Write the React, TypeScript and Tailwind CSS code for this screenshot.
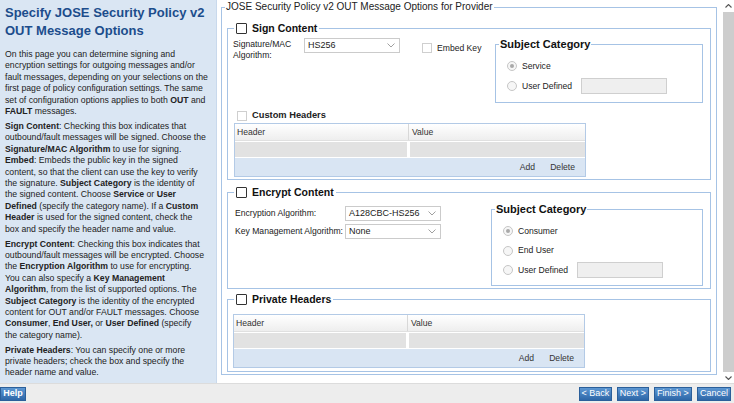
import React from "react";

const Check = ({ dark }: { dark?: boolean }) =>
  dark ? (
    <span className="inline-block h-[11px] w-[11px] shrink-0 rounded-[1px] border border-[#333] bg-white" />
  ) : (
    <span className="inline-block h-[10px] w-[10px] shrink-0 border border-[#cfcfcf] bg-white" />
  );

const Radio = ({ on }: { on?: boolean }) => (
  <span className="flex h-[10px] w-[10px] shrink-0 items-center justify-center rounded-full border border-[#c6c6c6] bg-[#f6f6f6]">
    {on && <span className="h-[4px] w-[4px] rounded-full bg-[#a9a9a9]" />}
  </span>
);

const Chevron = () => (
  <svg width="8" height="5" viewBox="0 0 8 5" className="shrink-0">
    <path d="M0.5 0.5 L4 4 L7.5 0.5" fill="none" stroke="#a0a0a0" strokeWidth="1" />
  </svg>
);

const Select = ({ value }: { value: string }) => (
  <div className="flex h-[15px] w-[96px] shrink-0 items-center justify-between border border-[#cbcbcb] bg-white pl-[3px] pr-[4px] text-[9px] leading-[13px] text-[#222]">
    <span>{value}</span>
    <Chevron />
  </div>
);

const Table = () => (
  <div className="w-[352px] border border-[#b3cae6] text-[8.6px] text-[#333]">
    <div className="flex h-[17px] border-b border-[#e0e0e0] bg-linear-to-b from-white to-[#eeeeee] leading-[16px]">
      <div className="w-[174px] border-r border-[#d8d8d8] pl-[2px]">Header</div>
      <div className="flex-1 pl-[3px]">Value</div>
    </div>
    <div className="flex h-[17px] gap-[3px] bg-white py-[1px]">
      <div className="w-[172px] bg-[#e2e2e2]" />
      <div className="flex-1 bg-[#e2e2e2]" />
    </div>
    <div className="flex h-[18px] items-center justify-end bg-[#d9e5f3] pr-[10px]">
      <span>Add</span>
      <span className="ml-[15px]">Delete</span>
    </div>
  </div>
);

const L = ({ children }: { children: React.ReactNode }) => (
  <div className="whitespace-nowrap leading-[11.4px]">{children}</div>
);

const Btn = ({ children, w, bold }: { children: React.ReactNode; w: string; bold?: boolean }) => (
  <div
    className={`flex h-[14px] items-center justify-center border border-[#2b5f9a] bg-linear-to-b from-[#5d97d2] to-[#2d67a8] text-[9px] text-white ${w} ${bold ? "font-bold" : ""}`}
  >
    {children}
  </div>
);

export default function App() {
  return (
    <div className="flex h-[403px] w-[734px] flex-col overflow-hidden bg-white font-['Liberation_Sans',Arial,sans-serif] text-[#222]">
      <div className="flex h-[383px]">
        {/* left help panel */}
        <div className="w-[217px] shrink-0 border-r border-[#c9d9ec] bg-[#dae6f3] pl-[5px] pt-[4px] text-[8.7px] text-[#222]">
          <div className="text-[13px] font-bold leading-[18px] text-[#1c4d8c]">
            Specify JOSE Security Policy v2
            <br />
            OUT Message Options
          </div>
          <div className="mt-[9px]">
            <L>On this page you can determine signing and</L>
            <L>encryption settings for outgoing messages and/or</L>
            <L>fault messages, depending on your selections on the</L>
            <L>first page of policy configuration settings. The same</L>
            <L>
              set of configuration options applies to both <b>OUT</b> and
            </L>
            <L>
              <b>FAULT</b> messages.
            </L>
          </div>
          <div className="mt-[3.5px]">
            <L>
              <b>Sign Content</b>: Checking this box indicates that
            </L>
            <L>outbound/fault messages will be signed. Choose the</L>
            <L>
              <b>Signature/MAC Algorithm</b> to use for signing.
            </L>
            <L>
              <b>Embed</b>: Embeds the public key in the signed
            </L>
            <L>content, so that the client can use the key to verify</L>
            <L>
              the signature. <b>Subject Category</b> is the identity of
            </L>
            <L>
              the signed content. Choose <b>Service</b> or <b>User</b>
            </L>
            <L>
              <b>Defined</b> (specify the category name). If a <b>Custom</b>
            </L>
            <L>
              <b>Header</b> is used for the signed content, check the
            </L>
            <L>box and specify the header name and value.</L>
          </div>
          <div className="mt-[3.5px]">
            <L>
              <b>Encrypt Content</b>: Checking this box indicates that
            </L>
            <L>outbound/fault messages will be encrypted. Choose</L>
            <L>
              the <b>Encryption Algorithm</b> to use for encrypting.
            </L>
            <L>
              You can also specify a <b>Key Management</b>
            </L>
            <L>
              <b>Algorithm</b>, from the list of supported options. The
            </L>
            <L>
              <b>Subject Category</b> is the identity of the encrypted
            </L>
            <L>content for OUT and/or FAULT messages. Choose</L>
            <L>
              <b>Consumer</b>, <b>End User,</b> or <b>User Defined</b> (specify
            </L>
            <L>the category name).</L>
          </div>
          <div className="mt-[3.5px]">
            <L>
              <b>Private Headers</b>: You can specify one or more
            </L>
            <L>private headers; check the box and specify the</L>
            <L>header name and value.</L>
          </div>
        </div>

        {/* main area */}
        <div className="flex flex-1">
          <div className="w-[506px] pl-[4px] pt-[1px]">
            <fieldset className="w-[496px] border border-[#a6c3e5] pb-[2px]">
              <legend className="ml-[3px] px-[1px] text-[10px] leading-[12px] text-[#222]">
                JOSE Security Policy v2 OUT Message Options for Provider
              </legend>
              <div className="px-[5px]">
                {/* Sign Content */}
                <fieldset className="mt-[9px] w-[484px] border border-[#a6c3e5] pb-[2px]">
                  <legend className="ml-[6px] px-[2px]">
                    <span className="flex h-[13px] items-center gap-[5px]">
                      <Check dark />
                      <span className="text-[10.5px] font-bold leading-[13px] text-[#111]">Sign Content</span>
                    </span>
                  </legend>
                  <div className="pl-[5px] pr-[7px]">
                    <div className="mt-[3px] flex items-start">
                      <div className="w-[71px] pt-[0.5px] text-[8.6px] leading-[11px]">
                        Signature/MAC
                        <br />
                        Algorithm:
                      </div>
                      <Select value="HS256" />
                      <div className="ml-[22px] mt-[5px] flex items-center">
                        <Check />
                        <span className="ml-[5px] text-[8.6px] leading-[10px]">Embed Key</span>
                      </div>
                      <fieldset className="ml-auto w-[208px] border border-[#a6c3e5] pb-[8px]">
                        <legend className="ml-[3px] px-[1px] text-[11px] font-bold leading-[12px] text-[#111]">
                          Subject Category
                        </legend>
                        <div className="flex flex-col gap-[4px] pl-[11px] pt-[8px] text-[8.6px]">
                          <div className="flex h-[16px] items-center">
                            <Radio on />
                            <span className="ml-[5px]">Service</span>
                          </div>
                          <div className="flex h-[16px] items-center">
                            <Radio />
                            <span className="ml-[5px]">User Defined</span>
                            <span className="ml-[9px] h-[16px] w-[86px] border border-[#cfcfcf] bg-[#efefef]" />
                          </div>
                        </div>
                      </fieldset>
                    </div>
                    <div className="mt-[6px] flex h-[13px] items-center pl-[4px]">
                      <Check />
                      <span className="ml-[5px] text-[9.3px] font-bold text-[#222]">Custom Headers</span>
                    </div>
                    <div className="ml-[1px] mt-[1px]">
                      <Table />
                    </div>
                  </div>
                </fieldset>

                {/* Encrypt Content */}
                <fieldset className="mt-[6px] w-[484px] border border-[#a6c3e5] pb-[2px]">
                  <legend className="ml-[6px] px-[2px]">
                    <span className="flex h-[13px] items-center gap-[5px]">
                      <Check dark />
                      <span className="text-[10.5px] font-bold leading-[13px] text-[#111]">Encrypt Content</span>
                    </span>
                  </legend>
                  <div className="pl-[7px] pr-[7px]">
                    <div className="mt-[4px] flex items-start">
                      <div className="mt-[3px] flex flex-col gap-[3px] text-[8.6px]">
                        <div className="flex items-center">
                          <span className="w-[110px]">Encryption Algorithm:</span>
                          <Select value="A128CBC-HS256" />
                        </div>
                        <div className="flex items-center">
                          <span className="w-[110px]">Key Management Algorithm:</span>
                          <Select value="None" />
                        </div>
                      </div>
                      <fieldset className="ml-auto w-[212px] border border-[#a6c3e5] pb-[7px]">
                        <legend className="ml-[3px] px-[1px] text-[11px] font-bold leading-[12px] text-[#111]">
                          Subject Category
                        </legend>
                        <div className="flex flex-col gap-[3.5px] pl-[11px] pt-[8px] text-[8.6px]">
                          <div className="flex h-[16px] items-center">
                            <Radio on />
                            <span className="ml-[5px]">Consumer</span>
                          </div>
                          <div className="flex h-[16px] items-center">
                            <Radio />
                            <span className="ml-[5px]">End User</span>
                          </div>
                          <div className="flex h-[16px] items-center">
                            <Radio />
                            <span className="ml-[5px]">User Defined</span>
                            <span className="ml-[9px] h-[16px] w-[86px] border border-[#cfcfcf] bg-[#efefef]" />
                          </div>
                        </div>
                      </fieldset>
                    </div>
                  </div>
                </fieldset>

                {/* Private Headers */}
                <fieldset className="mt-[4px] w-[484px] border border-[#a6c3e5] pb-[3px]">
                  <legend className="ml-[6px] px-[2px]">
                    <span className="flex h-[13px] items-center gap-[5px]">
                      <Check dark />
                      <span className="text-[10.5px] font-bold leading-[13px] text-[#111]">Private Headers</span>
                    </span>
                  </legend>
                  <div className="mt-[8px] pl-[5px]">
                    <Table />
                  </div>
                </fieldset>
              </div>
            </fieldset>
          </div>

          {/* scrollbar */}
          <div className="flex w-[11px] flex-col bg-white">
            <div className="flex h-[12px] items-center justify-center">
              <svg width="7" height="4" viewBox="0 0 7 4">
                <path d="M0.5 3.5 L3.5 0.5 L6.5 3.5" fill="none" stroke="#555" strokeWidth="1.1" />
              </svg>
            </div>
            <div className="flex-1 bg-[#cdcdcd]" />
            <div className="flex h-[11px] items-center justify-center">
              <svg width="7" height="4" viewBox="0 0 7 4">
                <path d="M0.5 0.5 L3.5 3.5 L6.5 0.5" fill="none" stroke="#555" strokeWidth="1.1" />
              </svg>
            </div>
          </div>
        </div>
      </div>

      {/* bottom bar */}
      <div className="flex h-[20px] items-center border-t border-[#dcdcdc] bg-[#ededed] pr-[3px]">
        <Btn w="w-[26px]" bold>
          Help
        </Btn>
        <div className="ml-auto flex items-center gap-[5px]">
          <Btn w="w-[33px]">&lt; Back</Btn>
          <Btn w="w-[32px]">Next &gt;</Btn>
          <Btn w="w-[38px]">Finish &gt;</Btn>
          <Btn w="w-[34px]">Cancel</Btn>
        </div>
      </div>
    </div>
  );
}
